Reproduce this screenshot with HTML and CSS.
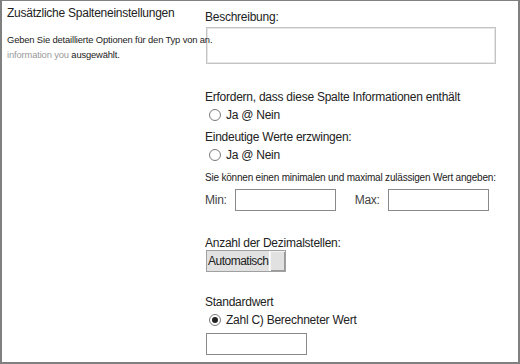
FILE: index.html
```html
<!DOCTYPE html>
<html lang="de">
<head>
    <meta charset="UTF-8">
    <meta name="viewport" content="width=device-width, initial-scale=1.0">
    <title>Zusätzliche Spalteneinstellungen</title>
    <link rel="stylesheet" href="styles.css">
</head>
<body>
    <div class="frame">
        <aside class="side">
            <h2 class="side-title">Zusätzliche Spalteneinstellungen</h2>
            <p class="side-text">Geben Sie detaillierte Optionen für den Typ von an.<br><span class="muted">information you</span> ausgewählt.</p>
        </aside>
        <section class="main">
            <label class="label">Beschreibung:</label>
            <div class="textarea"></div>

            <p class="label label-required">Erfordern, dass diese Spalte Informationen enthält</p>
            <div class="radio-row">
                <span class="radio"></span>
                <span>Ja @ Nein</span>
            </div>

            <p class="label label-unique">Eindeutige Werte erzwingen:</p>
            <div class="radio-row">
                <span class="radio"></span>
                <span>Ja @ Nein</span>
            </div>

            <p class="small">Sie können einen minimalen und maximal zulässigen Wert angeben:</p>
            <div class="range-row">
                <span>Min:</span>
                <span class="input"></span>
                <span class="max-label">Max:</span>
                <span class="input"></span>
            </div>

            <p class="label label-decimals">Anzahl der Dezimalstellen:</p>
            <div class="select">
                <span class="select-value">Automatisch</span>
                <span class="select-arrow"></span>
            </div>

            <p class="label label-default">Standardwert</p>
            <div class="radio-row">
                <span class="radio checked"></span>
                <span>Zahl C) Berechneter Wert</span>
            </div>
            <span class="input input-default"></span>
        </section>
    </div>
</body>
</html>
```

FILE: styles.css
```css
html {
    box-sizing: border-box;
    font-family: 'Liberation Sans', Arial, sans-serif;
    font-size: 12px;
    color: #222;
}

*, *::after, *::before {
    box-sizing: inherit;
}

body {
    margin: 0;
}

p, h2 {
    margin: 0;
}

.frame {
    display: flex;
    width: 520px;
    height: 364px;
    border: 2px solid #808080;
    border-top-width: 1px;
    background: #fff;
}

.side {
    width: 203px;
    padding: 5px 0 0 5px;
    position: relative;
    z-index: 1;
}

.side-title {
    font-size: 12px;
    font-weight: normal;
    letter-spacing: -0.25px;
}

.side-text {
    margin-top: 12px;
    font-size: 9.4px;
    line-height: 15px;
    white-space: nowrap;
    letter-spacing: -0.15px;
}

.muted {
    color: #9a9a9a;
}

.main {
    flex: 1;
    padding-top: 9px;
    letter-spacing: -0.25px;
}

.label {
    display: block;
    line-height: 14px;
}

.textarea {
    width: 290px;
    height: 37px;
    margin: 3px 0 0 1px;
    border: 1px solid #c4c4c4;
    box-shadow: inset 0 0 0 1px #e6e6e6;
}

.label-required {
    margin-top: 26px;
}

.label-unique {
    margin-top: 8px;
}

.radio-row {
    display: flex;
    align-items: center;
    gap: 5px;
    margin: 4px 0 0 4px;
    height: 14px;
}

.radio {
    width: 12px;
    height: 12px;
    border: 1px solid #7a7a7a;
    border-radius: 50%;
    position: relative;
}

.radio.checked::after {
    content: '';
    position: absolute;
    left: 2px;
    top: 2px;
    width: 6px;
    height: 6px;
    border-radius: 50%;
    background: #222;
}

.small {
    margin-top: 10px;
    font-size: 10px;
    line-height: 12px;
    letter-spacing: -0.2px;
}

.range-row {
    display: flex;
    align-items: center;
    margin-top: 5px;
    color: #444;
}

.input {
    display: block;
    width: 101px;
    height: 22px;
    border: 1px solid #8a8a8a;
    margin-left: 8px;
}

.max-label {
    margin-left: 19px;
}

.label-decimals {
    margin-top: 25px;
}

.select {
    display: flex;
    width: 80px;
    height: 22px;
    margin: 0 0 0 1px;
    border: 1px solid #a0a0a0;
    background: #e1e1e1;
}

.select-value {
    width: 62px;
    padding: 3px 0 0 1px;
    letter-spacing: -0.5px;
    white-space: nowrap;
}

.select-arrow {
    flex: 1;
    border-left: 1px solid #fff;
    box-shadow: inset 1px 1px 0 #f4f4f4, inset -1px -1px 0 #9a9a9a;
}

.label-default {
    margin-top: 23px;
}

.input-default {
    margin: 6px 0 0 1px;
}
```
